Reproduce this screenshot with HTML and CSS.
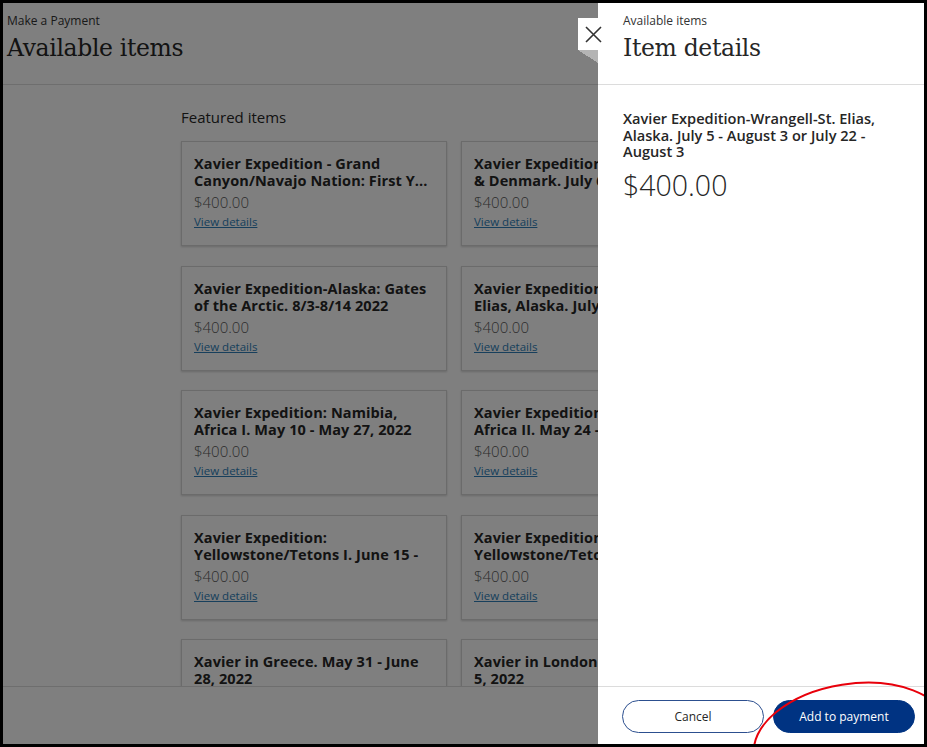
FILE: index.html
```html
<!DOCTYPE html>
<html lang="en">
<head>
<meta charset="utf-8">
<title>Available items</title>
<link rel="stylesheet" href="styles.css">
</head>
<body>
<div class="app">
  <div class="page">
    <header class="page-header">
      <div class="crumb">Make a Payment</div>
      <h1 class="title">Available items</h1>
    </header>
    <main class="main">
      <h2 class="section-title">Featured items</h2>
      <div class="grid">
        <div class="card">
          <div class="card-title">Xavier Expedition - Grand Canyon/Navajo Nation: First Y...</div>
          <div class="card-price">$400.00</div>
          <a class="card-link" href="#">View details</a>
        </div>
        <div class="card">
          <div class="card-title">Xavier Expedition - Greenland &amp;&nbsp;Denmark. July 6 - 20, 2022</div>
          <div class="card-price">$400.00</div>
          <a class="card-link" href="#">View details</a>
        </div>
        <div class="card">
          <div class="card-title">Xavier Expedition-Alaska: Gates of the Arctic. 8/3-8/14 2022</div>
          <div class="card-price">$400.00</div>
          <a class="card-link" href="#">View details</a>
        </div>
        <div class="card">
          <div class="card-title">Xavier Expedition-Wrangell-St. Elias, Alaska. July 5...</div>
          <div class="card-price">$400.00</div>
          <a class="card-link" href="#">View details</a>
        </div>
        <div class="card">
          <div class="card-title">Xavier Expedition: Namibia, Africa I. May 10 - May 27, 2022</div>
          <div class="card-price">$400.00</div>
          <a class="card-link" href="#">View details</a>
        </div>
        <div class="card">
          <div class="card-title">Xavier Expedition: Namibia, Africa II. May 24 - June 10</div>
          <div class="card-price">$400.00</div>
          <a class="card-link" href="#">View details</a>
        </div>
        <div class="card">
          <div class="card-title">Xavier Expedition: Yellowstone/Tetons I. June 15 -</div>
          <div class="card-price">$400.00</div>
          <a class="card-link" href="#">View details</a>
        </div>
        <div class="card">
          <div class="card-title">Xavier Expedition: Yellowstone/Tetons II. June 29 -</div>
          <div class="card-price">$400.00</div>
          <a class="card-link" href="#">View details</a>
        </div>
        <div class="card">
          <div class="card-title">Xavier in Greece. May 31 - June 28, 2022</div>
          <div class="card-price">$400.00</div>
          <a class="card-link" href="#">View details</a>
        </div>
        <div class="card">
          <div class="card-title">Xavier in London. May 22 - June 5, 2022</div>
          <div class="card-price">$400.00</div>
          <a class="card-link" href="#">View details</a>
        </div>
      </div>
    </main>
    <footer class="page-footer"></footer>
  </div>

  <div class="overlay"></div>

  <aside class="panel">
    <button class="close-tab" type="button" aria-label="Close">
      <svg width="17" height="17" viewBox="0 0 17 17" aria-hidden="true">
        <path d="M1 1 L16 16 M16 1 L1 16" stroke="#333" stroke-width="1.6" fill="none"/>
      </svg>
    </button>
    <div class="close-fold"></div>
    <header class="panel-header">
      <div class="crumb">Available items</div>
      <h1 class="title">Item details</h1>
    </header>
    <div class="panel-body">
      <div class="detail-title">Xavier Expedition-Wrangell-St. Elias, Alaska. July 5 - August 3 or July 22 - August 3</div>
      <div class="detail-price">$400.00</div>
    </div>
    <footer class="panel-footer">
      <button class="btn btn-secondary" type="button">Cancel</button>
      <button class="btn btn-primary" type="button">Add to payment</button>
    </footer>
  </aside>

  <svg class="annotation" width="921" height="741" viewBox="0 0 921 741" aria-hidden="true">
    <ellipse cx="848" cy="738" rx="98" ry="57" transform="rotate(-9 848 738)" fill="none" stroke="#e8000b" stroke-width="2"/>
  </svg>
</div>
</body>
</html>
```

FILE: styles.css
```css
* {
  box-sizing: border-box;
}

html, body {
  margin: 0;
  padding: 0;
  background: #000;
}

body {
  font-family: "Open Sans", "Noto Sans", sans-serif;
  color: #262626;
}

.app {
  position: relative;
  margin: 3px;
  width: 921px;
  height: 741px;
  overflow: hidden;
  background: #fff;
}

.page {
  display: flex;
  flex-direction: column;
  height: 100%;
}

.page-header {
  flex: none;
  height: 82px;
  padding: 10px 0 0 4px;
  border-bottom: 1px solid #dcdcdc;
}

.crumb {
  font-size: 12px;
  line-height: 16px;
  color: #333;
}

.title {
  margin: 4px 0 0;
  font-family: "DejaVu Serif", "Liberation Serif", serif;
  font-weight: normal;
  font-size: 23.5px;
  line-height: 30px;
  letter-spacing: -0.35px;
  color: #262626;
}

.main {
  flex: 1;
  overflow: hidden;
  padding: 22px 0 0 178px;
}

.section-title {
  margin: 0 0 14px;
  font-size: 15px;
  font-weight: normal;
  line-height: 20px;
  color: #262626;
}

.grid {
  display: grid;
  grid-template-columns: 266px 266px;
  column-gap: 14px;
  row-gap: 19.5px;
}

.card {
  height: 105px;
  padding: 13px 12px 0 12px;
  background: #fff;
  border: 1px solid #d6d6d6;
  box-shadow: 0 1px 2px rgba(0, 0, 0, 0.18);
}

.card-title {
  font-size: 14.5px;
  font-weight: 700;
  line-height: 17px;
  letter-spacing: 0.1px;
  height: 34px;
  overflow: hidden;
  color: #262626;
}

.card-price {
  margin-top: 4px;
  font-size: 15px;
  line-height: 19px;
  font-weight: 300;
  color: #595959;
}

.card-link {
  display: block;
  margin-top: 2px;
  font-size: 11.5px;
  line-height: 16px;
  color: #2e7fb8;
  text-decoration: underline;
}

.page-footer {
  flex: none;
  height: 58px;
  border-top: 1px solid #dcdcdc;
  background: #fff;
}

.overlay {
  position: absolute;
  inset: 0;
  background: rgba(0, 0, 0, 0.5);
}

.panel {
  position: absolute;
  top: 0;
  right: 0;
  bottom: 0;
  width: 326px;
  display: flex;
  flex-direction: column;
  background: #fff;
}

.close-tab {
  position: absolute;
  top: 15px;
  left: -20px;
  width: 24px;
  height: 32px;
  padding: 0 0 0 7px;
  border: 0;
  background: #fff;
  display: flex;
  align-items: center;
}

.close-fold {
  position: absolute;
  top: 47px;
  left: -20px;
  width: 20px;
  height: 13px;
  background: linear-gradient(to bottom left, #b4b4b4 50%, transparent 50%);
}

.panel-header {
  flex: none;
  height: 82px;
  padding: 10px 0 0 25px;
  border-bottom: 1px solid #dcdcdc;
}

.panel-body {
  flex: 1;
  padding: 25px 24px 0 25px;
}

.detail-title {
  font-size: 14.6px;
  font-weight: 600;
  line-height: 16.5px;
  color: #262626;
}

.detail-price {
  margin-top: 7px;
  font-size: 28.5px;
  font-weight: 300;
  line-height: 36px;
  color: #262626;
}

.panel-footer {
  flex: none;
  height: 58px;
  border-top: 1px solid #dcdcdc;
  display: flex;
  align-items: flex-start;
  gap: 9px;
  padding: 13px 0 0 24px;
}

.btn {
  width: 142px;
  height: 33px;
  border-radius: 17px;
  font-family: "Open Sans", "Noto Sans", sans-serif;
  font-size: 12px;
  cursor: pointer;
}

.btn-secondary {
  background: #fff;
  color: #262626;
  border: 1px solid #2c4f8f;
}

.btn-primary {
  background: #003382;
  color: #fff;
  border: 1px solid #003382;
}

.annotation {
  position: absolute;
  top: 0;
  left: 0;
  pointer-events: none;
}
```
